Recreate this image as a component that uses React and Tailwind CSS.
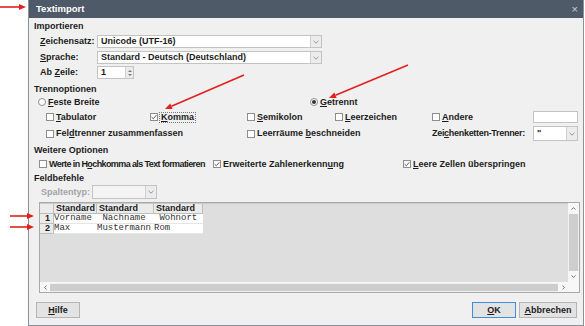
import React from 'react';

const U = ({ children }) => <span className="underline underline-offset-[1px]">{children}</span>;

function Box({ checked }) {
  return (
    <span className="w-[8px] h-[8px] border border-[#8e8e8e] bg-white flex items-center justify-center shrink-0 mr-[2px]">
      {checked && (
        <svg width="6" height="6" viewBox="0 0 6 6">
          <path d="M0.6 3.1 L2.3 4.7 L5.4 1.2" stroke="#4a4a4a" strokeWidth="0.9" fill="none" />
        </svg>
      )}
    </span>
  );
}

function Radio({ on }) {
  return (
    <span className="w-[8px] h-[8px] rounded-full border border-[#8e8e8e] bg-white flex items-center justify-center shrink-0 mr-[2px]">
      {on && <span className="w-[4px] h-[4px] rounded-full bg-[#333]" />}
    </span>
  );
}

function Chevron() {
  return (
    <svg width="6" height="4" viewBox="0 0 6 4">
      <path d="M0.5 0.8 L3 3.2 L5.5 0.8" stroke="#8a8a8a" strokeWidth="0.9" fill="none" />
    </svg>
  );
}

function Combo({ width, value, disabled }) {
  return (
    <div className={`${width} h-full border border-[#c3c3c3] ${disabled ? 'bg-[#f4f4f4]' : 'bg-white'} flex`}>
      <div className="flex-1 flex items-center pl-[3px] overflow-hidden whitespace-nowrap">{value}</div>
      <div className="w-[11px] border-l border-[#d0d0d0] bg-[#ececec] flex items-center justify-center">
        <Chevron />
      </div>
    </div>
  );
}

function Check({ width, checked, focus, tight, children }) {
  return (
    <div className={`${width} flex items-center shrink-0 whitespace-nowrap`}>
      <Box checked={checked} />
      <span className={`${focus ? 'outline outline-1 outline-dotted outline-[#777] px-[1px]' : ''} ${tight ? 'tracking-[-0.6px]' : ''}`}>{children}</span>
    </div>
  );
}

function Arrow({ x1, y1, x2, y2 }) {
  const dx = x2 - x1;
  const dy = y2 - y1;
  const len = Math.hypot(dx, dy);
  const ux = dx / len;
  const uy = dy / len;
  const hl = 7;
  const hw = 3;
  const bx = x2 - ux * hl;
  const by = y2 - uy * hl;
  const pts = `${x2},${y2} ${bx - uy * hw},${by + ux * hw} ${bx + uy * hw},${by - ux * hw}`;
  return (
    <g>
      <line x1={x1} y1={y1} x2={bx} y2={by} stroke="#e3211c" strokeWidth="1.6" />
      <polygon points={pts} fill="#e3211c" />
    </g>
  );
}

const cols = [
  { w: 'w-[43px]', head: 'Standard' },
  { w: 'w-[57px]', head: 'Standard' },
  { w: 'w-[49px]', head: 'Standard' },
];

const rows = [
  ['1', ['Vorname', ' Nachname', ' Wohnort']],
  ['2', ['Max', 'Mustermann', 'Rom']],
];

export default function App() {
  return (
    <div className="relative w-[585px] h-[326px] bg-white flex font-['Liberation_Sans',Arial,sans-serif] text-[9px] font-bold text-[#1c1c1c] overflow-hidden leading-none">
      <div className="w-[28px] shrink-0" />
      <div className="w-[556px] h-[326px] border-x border-b border-[#8b9198] bg-[#f0f0f0] flex flex-col">
        {/* title bar */}
        <div className="h-[18px] shrink-0 bg-[#4f5a68] flex items-center justify-between pl-[7px] pr-[5px] text-white text-[9.5px]">
          <span>Textimport</span>
          <span className="text-[#c9ced4] font-normal text-[11px]">×</span>
        </div>

        <div className="flex flex-col pl-[5px] pr-[5px]">
          <div className="h-[16px] flex items-center">Importieren</div>

          <div className="mt-[1px] h-[13px] flex items-center">
            <span className="pl-[6px] w-[63px]"><U>Z</U>eichensatz:</span>
            <Combo width="w-[225px]" value="Unicode (UTF-16)" />
          </div>
          <div className="mt-[3px] h-[13px] flex items-center">
            <span className="pl-[6px] w-[63px]"><U>S</U>prache:</span>
            <Combo width="w-[225px]" value="Standard - Deutsch (Deutschland)" />
          </div>
          <div className="mt-[2px] h-[13px] flex items-center">
            <span className="pl-[6px] w-[63px]">Ab <U>Z</U>eile:</span>
            <div className="w-[37px] h-full border border-[#c3c3c3] bg-white flex">
              <div className="flex-1 flex items-center pl-[3px]">1</div>
              <div className="w-[8px] border-l border-[#d0d0d0] bg-[#ececec] flex flex-col items-center justify-center gap-[2px]">
                <svg width="4" height="2" viewBox="0 0 4 2"><path d="M0 2 L2 0 L4 2Z" fill="#777" /></svg>
                <svg width="4" height="2" viewBox="0 0 4 2"><path d="M0 0 L2 2 L4 0Z" fill="#777" /></svg>
              </div>
            </div>
          </div>

          <div className="mt-[4px] h-[13px] flex items-center">Trennoptionen</div>
          <div className="h-[12px] flex items-center pl-[4px]">
            <div className="w-[272px] flex items-center"><Radio /><span><U>F</U>este Breite</span></div>
            <div className="flex items-center"><Radio on /><span><U>G</U>etrennt</span></div>
          </div>

          <div className="mt-[2px] h-[14px] flex items-center pl-[12px]">
            <Check width="w-[104px]"><U>T</U>abulator</Check>
            <Check width="w-[97px]" checked focus><U>K</U>omma</Check>
            <Check width="w-[88px]"><U>S</U>emikolon</Check>
            <Check width="w-[97px]"><U>L</U>eerzeichen</Check>
            <Check width="w-[101px]"><U>A</U>ndere</Check>
            <div className="w-[45px] h-[12px] border border-[#c3c3c3] bg-white" />
          </div>

          <div className="mt-[2px] h-[15px] flex items-center pl-[12px]">
            <Check width="w-[201px]">Fel<U>d</U>trenner zusammenfassen</Check>
            <Check width="w-[185px]">Leerräume <U>b</U>eschneiden</Check>
            <span className="w-[101px] shrink-0 tracking-[-0.3px]">Zei<U>c</U>henketten-Trenner:</span>
            <Combo width="w-[46px]" value={'"'} />
          </div>

          <div className="mt-[2px] h-[14px] flex items-center">Weitere Optionen</div>
          <div className="h-[14px] flex items-center pl-[5px]">
            <Check width="w-[174px]" tight>Werte in H<U>o</U>chkomma als Text formatieren</Check>
            <Check width="w-[190px]" checked>Erweiterte Zahlenerkenn<U>u</U>ng</Check>
            <Check width="w-[150px]" checked><U>L</U>eere Zellen überspringen</Check>
          </div>

          <div className="h-[14px] flex items-center">Feldbefehle</div>
          <div className="h-[14px] flex items-center pl-[7px]">
            <span className="w-[51px] text-[#a3a3a3]">Spaltentyp:</span>
            <Combo width="w-[65px]" value="" disabled />
          </div>

          {/* preview grid */}
          <div className="mt-[3px] ml-[5px] w-[541px] h-[91px] border border-[#a9a9a9] bg-[#dedede] flex flex-col">
            <div className="flex-1 flex min-h-0">
              <div className="flex-1 border-t border-[#c9c9c9]">
                <div className="flex h-[10px]">
                  <div className="w-[14px] border-r border-b border-[#bdbdbd] bg-[#ebebeb]" />
                  {cols.map((c, i) => (
                    <div key={i} className={`${c.w} border-r border-b border-[#bdbdbd] bg-[#ebebeb] flex items-center pl-[2px]`}>{c.head}</div>
                  ))}
                </div>
                {rows.map(([n, cells]) => (
                  <div key={n} className="flex h-[10px]">
                    <div className="w-[14px] border-r border-b border-[#bdbdbd] bg-[#ebebeb] flex items-center justify-end pr-[3px]">{n}</div>
                    {cells.map((t, i) => (
                      <div key={i} className={`${cols[i].w} border-b border-[#e6e6e6] bg-white flex items-center whitespace-pre overflow-hidden font-['Liberation_Mono',monospace] font-normal text-[9px] text-[#333]`}>{t}</div>
                    ))}
                  </div>
                ))}
              </div>
              <div className="w-[11px] flex flex-col bg-[#f0f0f0]">
                <div className="h-[11px] bg-[#f7f7f7] flex items-center justify-center">
                  <svg width="5" height="3" viewBox="0 0 5 3"><path d="M0.5 2.6 L2.5 0.6 L4.5 2.6" stroke="#666" strokeWidth="0.9" fill="none" /></svg>
                </div>
                <div className="flex-1 mx-[1px] bg-[#cdcdcd]" />
                <div className="h-[11px] bg-[#f7f7f7] flex items-center justify-center">
                  <svg width="5" height="3" viewBox="0 0 5 3"><path d="M0.5 0.4 L2.5 2.4 L4.5 0.4" stroke="#666" strokeWidth="0.9" fill="none" /></svg>
                </div>
              </div>
            </div>
            <div className="h-[10px] flex bg-[#f0f0f0] border-t border-[#f7f7f7]">
              <div className="w-[10px] bg-[#f7f7f7] flex items-center justify-center">
                <svg width="3" height="5" viewBox="0 0 3 5"><path d="M2.6 0.5 L0.6 2.5 L2.6 4.5" stroke="#666" strokeWidth="0.9" fill="none" /></svg>
              </div>
              <div className="flex-1 my-[1px] bg-[#cdcdcd]" />
              <div className="w-[10px] bg-[#f7f7f7] flex items-center justify-center">
                <svg width="3" height="5" viewBox="0 0 3 5"><path d="M0.4 0.5 L2.4 2.5 L0.4 4.5" stroke="#666" strokeWidth="0.9" fill="none" /></svg>
              </div>
              <div className="w-[11px] bg-[#f7f7f7]" />
            </div>
          </div>

          {/* buttons */}
          <div className="mt-[9px] h-[16px] flex items-center">
            <button className="ml-[2px] w-[44px] h-full border border-[#b5b5b5] bg-[#e3e3e3] flex items-center justify-center"><U>H</U>ilfe</button>
            <div className="flex-1" />
            <button className="w-[44px] h-full border border-[#3c8fd8] bg-[#e3e3e3] flex items-center justify-center"><U>O</U>K</button>
            <button className="ml-[3px] mr-[1px] w-[58px] h-full border border-[#b5b5b5] bg-[#e3e3e3] flex items-center justify-center"><U>A</U>bbrechen</button>
          </div>
        </div>
      </div>

      <svg className="absolute inset-0 pointer-events-none" width="585" height="326">
        <Arrow x1={0} y1={7} x2={26} y2={7} />
        <Arrow x1={244} y1={75} x2={165} y2={109} />
        <Arrow x1={408} y1={65} x2={329} y2={98} />
        <Arrow x1={10} y1={216} x2={34} y2={216} />
        <Arrow x1={10} y1={227} x2={34} y2={227} />
      </svg>
    </div>
  );
}
